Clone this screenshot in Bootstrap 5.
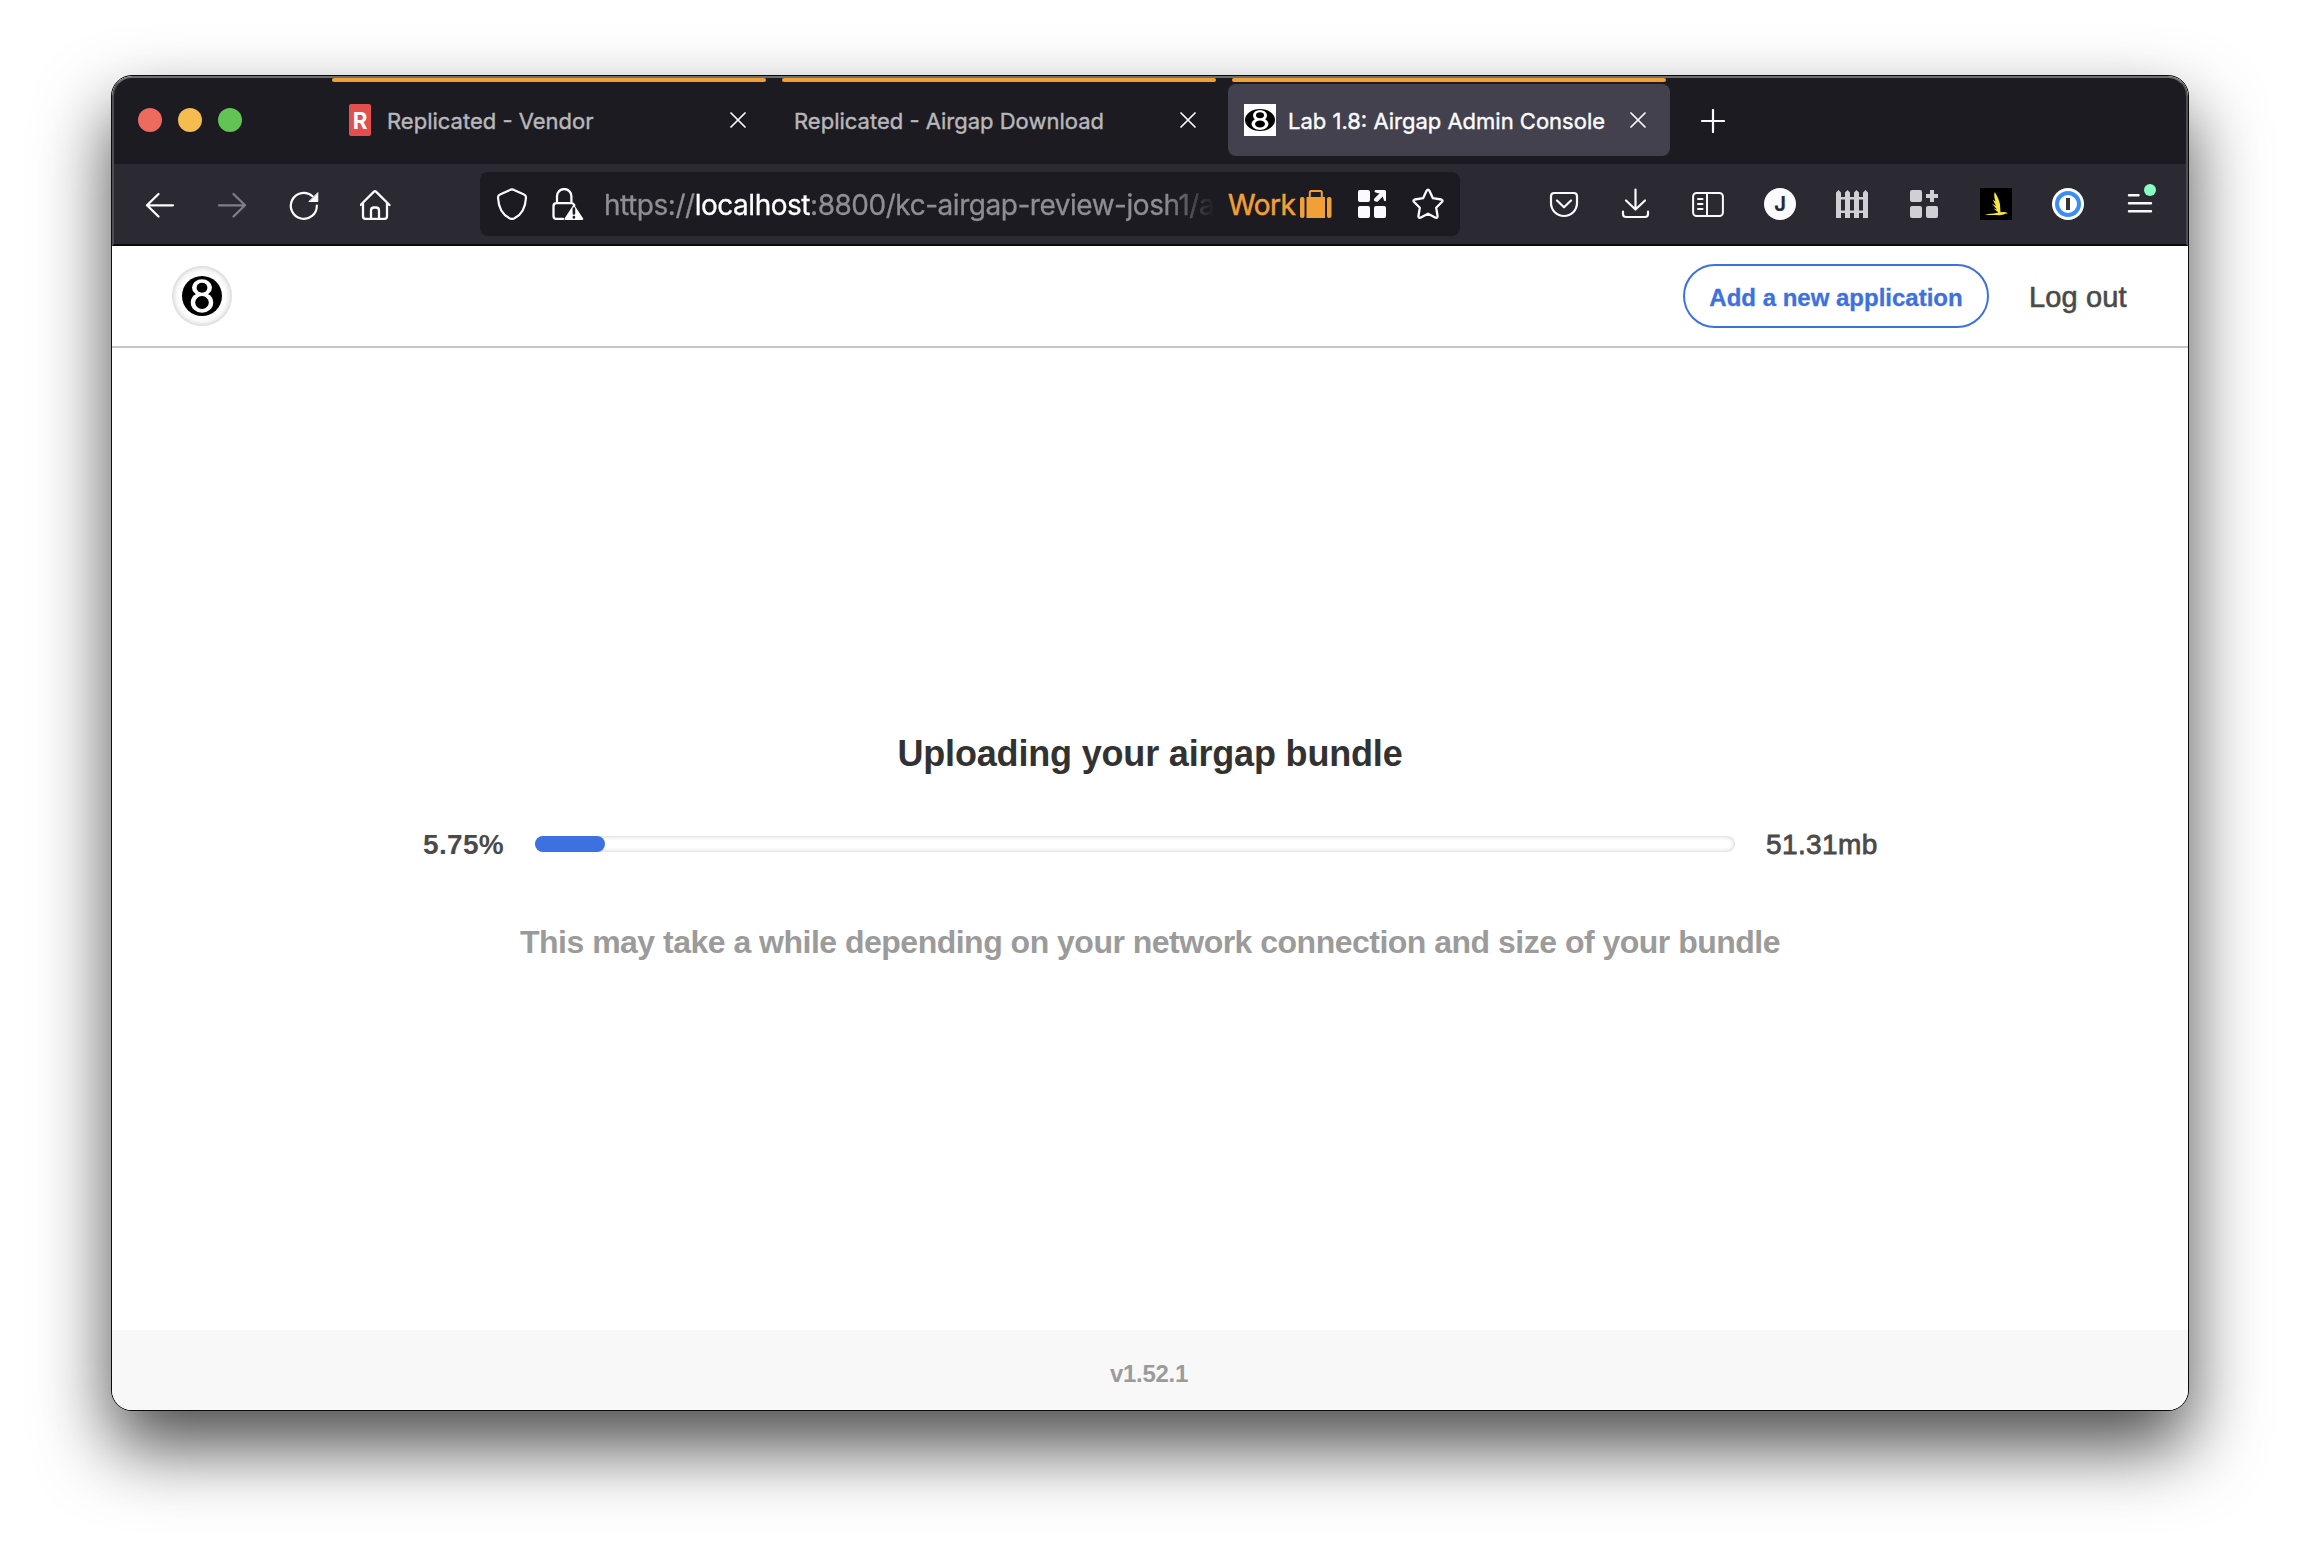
<!DOCTYPE html>
<html lang="en">
<head>
<meta charset="utf-8">
<title>Lab 1.8: Airgap Admin Console</title>
<link href="https://cdn.jsdelivr.net/npm/bootstrap@5.3.0/dist/css/bootstrap.min.css" rel="stylesheet">
<style>
body{background:#fff;width:2300px;height:1558px;overflow:hidden;padding:75px 111px 0;font-family:"Liberation Sans",Arial,sans-serif}
svg{display:block;flex:none}
.window{width:2078px;height:1336px;border:1px solid #0b0b0b;border-radius:21px;box-shadow:0 36px 72px rgba(0,0,0,.7);background:#0b0b0c}
.window-inner{height:1334px;border-radius:20px;overflow:hidden}
.chrome{height:170px;color:#fbfbfe;font-family:Inter,sans-serif;border:2px solid #4e4e53;border-top-color:#6c6f6f;border-bottom-color:#0b0b0f;border-radius:20px 20px 0 0;background:#1c1b22}
.chrome svg{fill:none;stroke:#fbfbfe;stroke-width:2;stroke-linecap:round;stroke-linejoin:round}
.tabs-row{height:86px;padding-left:24px}
.lights{width:104px;gap:16px;margin:30px 82px 0 0;height:24px}
.light{width:24px;height:24px;border-radius:50%;flex:none}
.light-close{background:#ee6a5f}
.light-min{background:#f5bd4f}
.light-max{background:#61c455}
.tab-item{width:450px;height:86px;padding:0 4px;font-size:22px;color:#b8b7bb}
.tab-line{height:4px;margin:0 4px 2px;border-radius:2px;background:#f1a036}
.tab-face{height:72px;border-radius:8px;padding:0 24px 0 16px}
.tab-face.on{background:#42414d;color:#fbfbfe}
.tab-face svg.fav{stroke:none}
.tab-name{padding-top:3px;-webkit-text-stroke:.4px currentColor;white-space:nowrap}
.fav-r{margin-left:5px;margin-right:16px}
.fav-eight{margin-right:12px}
.tab-plus{margin:31px 0 0 27px}
.tools{height:80px;background:#2b2a33;padding:0 30px}
.tool-set{gap:40px}
.url{width:980px;height:64px;border-radius:8px;background:#1c1b22;padding:0 16px;margin:0 88px}
.url-ico{margin-left:24px}
.addr{font-size:28px;letter-spacing:-.468px;color:#8f8e93;width:611px;padding-top:2px;white-space:nowrap;margin-left:20px;-webkit-text-stroke:.3px currentColor;-webkit-mask-image:linear-gradient(90deg,#000 560px,transparent 611px);mask-image:linear-gradient(90deg,#000 560px,transparent 611px)}
.work{font-size:28px;color:#f1a036;width:72px;padding-top:2px;margin-left:13px;white-space:nowrap;letter-spacing:-.5px;-webkit-text-stroke:.5px currentColor}
.page-head{height:102px;border-bottom:2px solid #c4c7ca;padding:0 60px}
.logo-disc{width:60px;height:60px;border-radius:50%;box-shadow:inset 0 0 7px rgba(0,0,0,.28);padding:10px}
.chrome .tools svg.soft{fill:#cfcfd4;stroke:none}
.btn-add{width:306px;height:64px;border:2px solid #3d70e0;color:#3d70e0;border-radius:32px;font-size:24px;font-weight:700;padding:3px 0 0;white-space:nowrap;margin-right:40px;-webkit-text-stroke:.3px currentColor}
.logout{font-size:29px;letter-spacing:.15px;color:#4a4a4a;-webkit-text-stroke:.6px #4a4a4a;width:99px;padding-top:3px;white-space:nowrap}
.main-area{height:982px;background:#fff}
.t1{font-size:36px;font-weight:700;letter-spacing:-.179px;color:#323232;line-height:44px;margin:384px 0 0}
.meter{margin-top:46px;height:44px;font-size:28px;color:#4a4a4a}
.meter-num{padding-top:1px;white-space:nowrap}
.pct{width:81px;font-weight:700;letter-spacing:.319px;margin-right:31px}
.track{width:1200px;height:16px;border-radius:8px;background:#fff;box-shadow:inset 0 0 5px rgba(0,0,0,.22)}
.track .progress-bar{height:16px;border-radius:8px;background:#3d70e0}
.mb-size{width:111px;letter-spacing:.4px;margin-left:31px;-webkit-text-stroke:.8px #4a4a4a}
.t2{font-size:32px;font-weight:700;letter-spacing:-.506px;color:#9b9b9b;line-height:40px;margin-top:56px}
.foot{height:80px;background:#f8f8f8;color:#9b9b9b;font-size:24px;font-weight:700;letter-spacing:-.297px;padding-top:8px;padding-right:2px}
</style>
</head>
<body>
<div class="window"><div class="window-inner bg-white">
  <div class="chrome">
    <div class="tabs-row d-flex">
      <div class="lights d-flex"><span class="light light-close"></span><span class="light light-min"></span><span class="light light-max"></span></div>
      <div class="tab-item"><div class="tab-line"></div><div class="tab-face d-flex align-items-center">
        <svg class="fav fav-r" width="22" height="32" viewBox="0 0 22 32"><rect width="22" height="32" rx="2" fill="#e34f4f"/><text x="11" y="24.500" text-anchor="middle" font-family="Roboto" font-weight="700" font-size="23" fill="#fff">R</text></svg>
        <span class="tab-name">Replicated - Vendor</span>
        <svg class="ms-auto" width="16" height="16" viewBox="0 0 16 16"><path d="M1 1l14 14M15 1L1 15" stroke-width="1.700"/></svg></div></div>
      <div class="tab-item"><div class="tab-line"></div><div class="tab-face d-flex align-items-center">
        <span class="tab-name">Replicated - Airgap Download</span>
        <svg class="ms-auto" width="16" height="16" viewBox="0 0 16 16"><path d="M1 1l14 14M15 1L1 15" stroke-width="1.700"/></svg></div></div>
      <div class="tab-item"><div class="tab-line"></div><div class="tab-face on d-flex align-items-center">
        <svg class="fav fav-eight" width="32" height="32" viewBox="0 0 32 32"><rect width="32" height="32" fill="#fff"/><ellipse cx="16" cy="16" rx="15" ry="11" fill="#000"/><ellipse cx="16" cy="11.500" rx="7" ry="5.500" fill="#fff"/><ellipse cx="16" cy="20" rx="8.500" ry="6" fill="#fff"/><ellipse cx="16" cy="11.300" rx="4" ry="3" fill="#000"/><ellipse cx="16" cy="20" rx="5" ry="3.500" fill="#000"/></svg>
        <span class="tab-name">Lab 1.8: Airgap Admin Console</span>
        <svg class="ms-auto" width="16" height="16" viewBox="0 0 16 16"><path d="M1 1l14 14M15 1L1 15" stroke-width="1.700"/></svg></div></div>
      <svg class="tab-plus" width="24" height="24" viewBox="0 0 24 24"><path d="M12 1v22M1 12h22" stroke-width="2.200"/></svg>
    </div>
    <div class="tools d-flex align-items-center">
      <div class="tool-set d-flex">
        <svg width="32" height="32" viewBox="0 0 32 32"><path d="M29 17.300H3M14.500 6L3 17.300l11.500 11.200" stroke-width="2.300"/></svg>
        <svg width="32" height="32" viewBox="0 0 32 32" opacity=".4"><path d="M3 17.300h26M17.500 6L29 17.300 17.500 28.500" stroke-width="2.300"/></svg>
        <svg width="32" height="32" viewBox="0 0 32 32"><path d="M28.800 17.500A13 13 0 1 1 24.500 8.200" stroke-width="2.200"/><path d="M29.800 5v8.500h-8.500z" fill="#fbfbfe" stroke-width="1"/></svg>
        <svg width="32" height="32" viewBox="0 0 32 32"><path d="M1.500 17L15 3.600Q16 2.700 17 3.600L30.500 17M4 15v13q0 3 3 3h18q3 0 3-3V15M12 31V22.500q0-3 3-3h2q3 0 3 3V31" transform="translate(-1)" stroke-width="2.300"/></svg>
      </div>
      <div class="url d-flex align-items-center">
        <svg width="32" height="32" viewBox="0 0 32 32"><path d="M16 1.300Q17 1.300 18 2L28 6.500Q30 7.300 30 9.500C29.500 20 25 27 18.500 30.300Q16 31.600 13.500 30.300C7 27 2.500 20 2 9.500Q2 7.300 4 6.500L14 2Q15 1.300 16 1.300z" stroke-width="2.200"/></svg>
        <svg class="url-ico" width="32" height="32" viewBox="0 0 32 32"><path d="M5 15V8.200a7.200 7.200 0 0 1 14.400 0V15M11 31H4.500Q1.500 31 1.500 28V18.200q0-3 3-3h14.800q2.200 0 3 2" stroke-width="2.300"/><path d="M21.800 18.300L30 31H13.700z" fill="#fbfbfe" stroke-width="2.400"/><path d="M21.900 20.500v5M21.900 29v.5" stroke="#1c1b22" stroke-width="2.600"/></svg>
        <div class="addr">https://<span class="text-white">localhost</span>:8800/kc-airgap-review-josh1/ai</div>
        <div class="work">Work</div>
        <svg width="32" height="32" viewBox="0 0 32 32"><g fill="#f1a036" stroke="none"><rect x="0" y="9" width="4.500" height="21" rx="2"/><rect x="27" y="9" width="4.500" height="21" rx="2"/><rect x="6.500" y="9" width="18.500" height="21"/></g><path d="M9.800 9V4.500Q9.800 3 11.300 3h9Q21.800 3 21.800 4.500V9" stroke="#f1a036"/></svg>
        <svg class="url-ico" width="32" height="32" viewBox="0 0 32 32"><g fill="#fbfbfe" stroke="none"><rect x="2" y="2" width="12" height="12" rx="2"/><rect x="2" y="18" width="12" height="12" rx="2"/><rect x="18" y="18" width="12" height="12" rx="2"/><path d="M19.500 2H28.500Q30 2 30 3.500V12.500Q29 14 28 12.500L26.800 8.500 21.500 13.800Q19.500 14 18 12.500 17.800 11 18.500 10.200L23.500 5.500 19.500 4.500Q17.500 3 19.500 2z"/></g></svg>
        <svg class="url-ico" width="32" height="32" viewBox="0 0 32 32"><path d="M14.700 2.600q1.300-2 2.600 0l3.600 7.600 8.400 1.300q2 .6.800 2.300l-5.900 6 1.400 8.400q0 2-2 1.500L16 25.700 8.400 29.700q-2 .5-2-1.500L7.800 19.800 1.900 13.800q-1.200-1.700.8-2.300l8.400-1.300z" stroke-width="2.300"/></svg>
      </div>
      <div class="tool-set d-flex">
        <svg width="32" height="32" viewBox="0 0 32 32"><path d="M6.300 5h19.400Q29 5 29 8.300V15a13 13 0 0 1-26 0V8.300Q3 5 6.300 5zM9 12.500l7 6.800 7-6.800" stroke-width="2.200"/></svg>
        <svg width="32" height="32" viewBox="0 0 32 32"><path d="M15.500 1.500V21M6 12.500l9.500 9 9.500-9M3 23.500v2.500q0 3 3 3h19q3 0 3-3v-2.500" stroke-width="2.200"/></svg>
        <svg width="32" height="32" viewBox="0 0 32 32"><rect x="1.100" y="5" width="29.800" height="23" rx="3.500"/><path d="M15 5v23M6 11h4.500M6 16h4.500M6 21h4.500"/></svg>
        <svg width="32" height="32" viewBox="0 0 32 32"><circle cx="16" cy="16" r="16" fill="#fbfbfe" stroke="none"/><text x="16" y="23" text-anchor="middle" font-family="Inter" font-weight="700" font-size="20" fill="#2b2a33" stroke="none">J</text></svg>
        <svg class="soft" width="32" height="32" viewBox="0 0 32 32"><path d="M0 4.500L2.500 2 5 4.500V30H0zM9 4.500L11.500 2 14 4.500V30H9zM18 4.500L20.500 2 23 4.500V30H18zM27 4.500L29.500 2 32 4.500V30H27zM0 9h32v2.600H0zM0 22.500h32v2.600H0z"/></svg>
        <svg class="soft" width="32" height="32" viewBox="0 0 32 32"><rect x="2" y="2" width="12" height="12" rx="2"/><rect x="2" y="18" width="12" height="12" rx="2"/><rect x="18" y="18" width="12" height="12" rx="2"/><path d="M22 2h4v4h4v4h-4v4h-4v-4h-4V6h4z"/></svg>
        <svg width="32" height="32" viewBox="0 0 32 32"><rect width="32" height="32" fill="#000" stroke="none"/><path d="M14.800 4C17.500 8.500 20.500 14 20.200 20L20.500 24.300Q25 23.500 28 25.200L25.500 25.700Q22 27.700 17 27H4.500Q8 25.500 14 25.500L18.500 24.500 13.500 20.500 17 21.500 11.800 15.500 16 18 12.800 11.800 15.500 13.500Q13.300 8 14.800 4z" fill="#f8e63c" stroke="none"/></svg>
        <svg width="32" height="32" viewBox="0 0 32 32"><circle cx="16" cy="16" r="16" fill="#fff" stroke="none"/><circle cx="16" cy="16" r="11" stroke="#3b8df5" stroke-width="4"/><rect x="14" y="10" width="4" height="12" fill="#333" stroke="none"/></svg>
        <svg width="32" height="32" viewBox="0 0 32 32" overflow="visible"><path d="M5 7.300h9.500M5 15.300h22M5 23.300h22" stroke-width="2.400"/><circle cx="26" cy="2" r="6" fill="#88ffc2" stroke="none"/></svg>
      </div>
    </div>
  </div>
  <header class="page-head d-flex align-items-center">
    <div class="logo-disc me-auto"><svg width="40" height="40" viewBox="0 0 40 40"><circle cx="20" cy="20" r="20"/><g fill="#fff"><ellipse cx="20" cy="11.500" rx="10" ry="8.200"/><ellipse cx="20" cy="26.500" rx="11.200" ry="10.200"/></g><ellipse cx="20" cy="11.700" rx="5.400" ry="5"/><ellipse cx="20" cy="26.500" rx="6.800" ry="6.500"/></svg></div>
    <button class="btn btn-add">Add a new application</button>
    <span class="logout">Log out</span>
  </header>
  <main class="main-area text-center overflow-hidden">
    <h1 class="t1">Uploading your airgap bundle</h1>
    <div class="meter d-flex justify-content-center align-items-center">
      <span class="meter-num pct text-start">5.75%</span>
      <div class="track"><div class="progress-bar" style="width:5.83%"></div></div>
      <span class="meter-num mb-size text-start">51.31mb</span>
    </div>
    <p class="t2 mb-0">This may take a while depending on your network connection and size of your bundle</p>
  </main>
  <footer class="foot d-flex align-items-center justify-content-center">v1.52.1</footer>
</div></div>
<script src="https://cdn.jsdelivr.net/npm/bootstrap@5.3.0/dist/js/bootstrap.bundle.min.js"></script>
</body>
</html>
